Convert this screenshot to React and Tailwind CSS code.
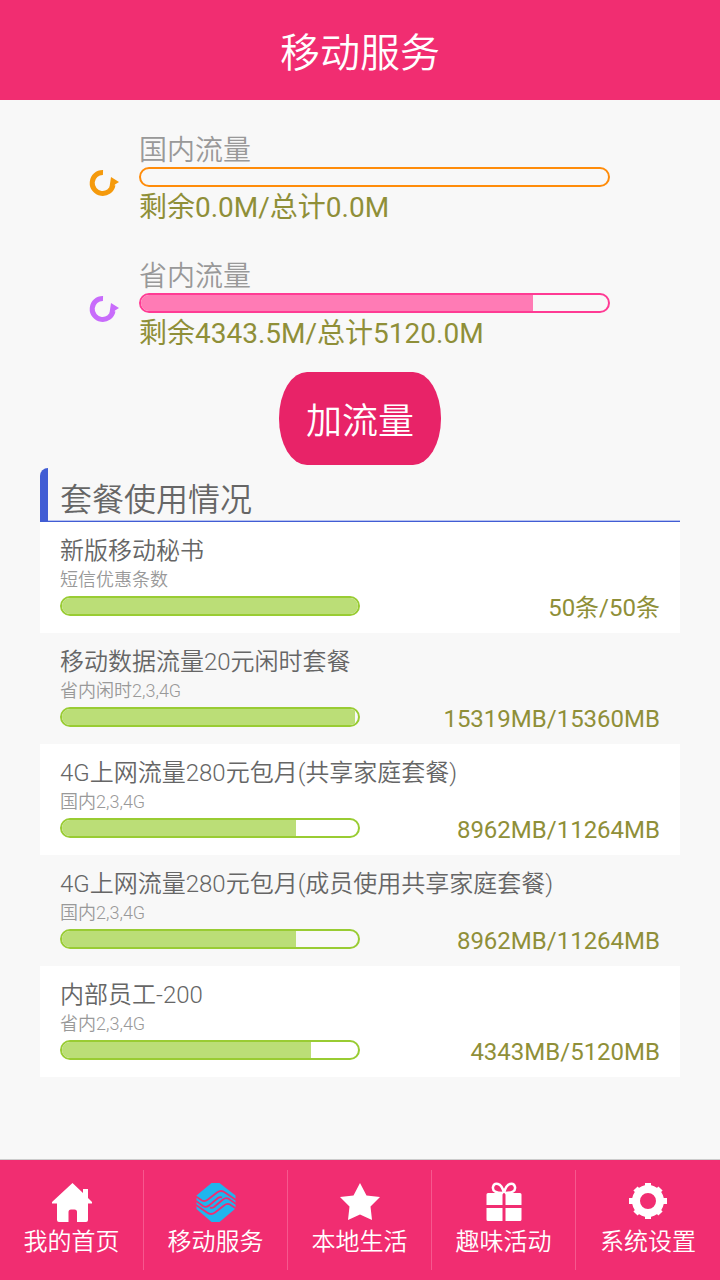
const quotas = [
  {
    name: '国内流量',
    summary: '剩余0.0M/总计0.0M',
    percent: 0,
    icon: 'text-[#f59a0c]',
    border: 'border-[#ff8c0a]',
    fill: 'bg-[#ffbb66]',
  },
  {
    name: '省内流量',
    summary: '剩余4343.5M/总计5120.0M',
    percent: 84,
    icon: 'text-[#c86cfb]',
    border: 'border-[#ff3b94]',
    fill: 'bg-[#ff7bb5]',
  },
];

const packages = [
  { name: '新版移动秘书', detail: '短信优惠条数', usage: '50条/50条', percent: 100 },
  { name: '移动数据流量20元闲时套餐', detail: '省内闲时2,3,4G', usage: '15319MB/15360MB', percent: 99 },
  { name: '4G上网流量280元包月(共享家庭套餐)', detail: '国内2,3,4G', usage: '8962MB/11264MB', percent: 79 },
  { name: '4G上网流量280元包月(成员使用共享家庭套餐)', detail: '国内2,3,4G', usage: '8962MB/11264MB', percent: 79 },
  { name: '内部员工-200', detail: '省内2,3,4G', usage: '4343MB/5120MB', percent: 84 },
];

const tabs = [
  { label: '我的首页', Icon: HomeIcon },
  { label: '移动服务', Icon: MobileIcon },
  { label: '本地生活', Icon: StarIcon },
  { label: '趣味活动', Icon: GiftIcon },
  { label: '系统设置', Icon: GearIcon },
];

export default function App() {
  return (
    <div className="flex min-h-screen flex-col bg-[#f8f8f8] font-['Roboto','Noto_Sans_CJK_SC',sans-serif] font-[350] text-[#666666]">
      <header className="bg-[#f12d71] pt-6 pb-4 text-center text-white">
        <h1 className="text-[40px] leading-[60px]">移动服务</h1>
      </header>
      <main className="flex-1 px-10">
        <section className="flex flex-col gap-[31px] pt-[34px] pr-[70px] pl-[49px]">
          {quotas.map((quota) => (
            <Quota key={quota.name} quota={quota} />
          ))}
        </section>
        <div className="mt-[17px] flex justify-center">
          <button
            type="button"
            className="rounded-[28px/46px] bg-[#e82368] px-[27px] pt-6 pb-4 text-4xl leading-[53px] text-white"
          >
            加流量
          </button>
        </div>
        <section className="mt-[3px]">
          <div className="flex border-b border-[#415dd4] shadow-[inset_0_-1px_#b8c2f0]">
            <span className="w-2 rounded-tl-lg bg-[#415dd4]" />
            <h2 className="pt-3 pl-3 text-[32px] leading-[41px]">套餐使用情况</h2>
          </div>
          <ul>
            {packages.map((item) => (
              <Package key={item.name} item={item} />
            ))}
          </ul>
        </section>
      </main>
      <nav className="grid grid-cols-5 border-t border-[#cccccc] bg-[#f12d71] py-[10px] text-white">
        {tabs.map(({ label, Icon }) => (
          <a
            key={label}
            href="#"
            className="flex h-[100px] flex-col items-center border-r border-[#f6588e] pt-3 text-2xl leading-10 last:border-r-0"
          >
            <Icon />
            {label}
          </a>
        ))}
      </nav>
    </div>
  );
}

const Quota = ({ quota }) => (
  <div className="flex items-center gap-5">
    <button type="button" aria-label="刷新" className={quota.icon}>
      <RefreshIcon />
    </button>
    <div className="flex-1">
      <p className="text-[28px] leading-[33px] text-[#999999]">{quota.name}</p>
      <Progress label={quota.name} percent={quota.percent} border={quota.border} fill={quota.fill} />
      <p className="text-[28px] leading-[42px] font-normal text-[#8f8f38]">{quota.summary}</p>
    </div>
  </div>
);

const Package = ({ item }) => (
  <li className="px-5 pt-3 pb-[9px] odd:bg-white">
    <h3 className="text-2xl leading-[34px]">{item.name}</h3>
    <p className="text-lg leading-6 text-[#999999]">{item.detail}</p>
    <div className="flex items-start justify-between">
      <div className="w-1/2 pt-1">
        <Progress label={item.name} percent={item.percent} border="border-[#99cc33]" fill="bg-[#bbde77]" />
      </div>
      <span className="text-2xl leading-8 font-normal text-[#8f8f38]">{item.usage}</span>
    </div>
  </li>
);

const Progress = ({ label, percent, border, fill }) => (
  <div
    role="progressbar"
    aria-label={label}
    aria-valuenow={percent}
    className={`h-5 overflow-hidden rounded-full border-2 ${border}`}
  >
    <div className={`h-full ${fill}`} style={{ width: `${percent}%` }} />
  </div>
);

const RefreshIcon = () => (
  <svg width="30" height="30" viewBox="0 0 30 30" fill="none">
    <path d="M14 5.500A10.500 10.500 0 1 0 24 18" stroke="currentColor" strokeWidth="5" />
    <path d="M22 10l8 5-4 2.500-2.500 4.500-3-2z" fill="currentColor" />
  </svg>
);

function HomeIcon() {
  return (
    <svg width="40" height="40" viewBox="0 0 40 40" fill="currentColor">
      <path d="M20.500 1 0 20v1.500h5V38a2 2 0 0 0 2 2h9.500V30q0-2.500 2.500-2.500h3.500q2.500 0 2.500 2.500v10h9a2 2 0 0 0 2-2V21.500h4V20l-4-4V7h-5v4z" />
    </svg>
  );
}

function MobileIcon() {
  return (
    <svg width="40" height="40" viewBox="0 0 40 40" fill="none">
      <path d="M15.500 1h8L39.500 13.500v13L23.500 40h-8L.5 27V13.500z" fill="#1fb5ee" />
      <g stroke="#f12d71" strokeWidth="1.800">
        <path d="M0 14.500L6 18.500Q9 20 12 17.500L21 10.500Q25 7.500 29 10.500L40 18" />
        <path d="M0 19L7 24Q10 26 13 23.500L22 16Q24 14.500 26 15.500" />
        <path d="M40 26.500L34 22.500Q31 21 28 23.500L19 30.500Q15 33.500 11 30.500L0 23" />
        <path d="M40 22L33 17Q30 15 27 17.500L18 25Q16 26.500 14 25.500" />
      </g>
    </svg>
  );
}

function StarIcon() {
  return (
    <svg width="40" height="40" viewBox="0 0 40 40" fill="currentColor">
      <path d="M20 1l6.500 12.500L40 15l-9.500 9.500L32 38 20 32.500 8 38l1.500-13.500L0 15l13.500-1.500z" />
    </svg>
  );
}

function GiftIcon() {
  return (
    <svg width="40" height="40" viewBox="0 0 40 40" fill="currentColor">
      <path d="M4 11h14.500v12H2.500V12.500q0-1.500 1.500-1.500zM21.500 11H36q1.500 0 1.500 1.500V23h-16zM2.500 26h16v13H4q-1.500 0-1.500-1.500zM21.500 26h16v11.500q0 1.500-1.500 1.500H21.500z" />
      <path
        d="M19 11Q8 11 9 5q1-4 5-3 4 1 6 9 2-8 6-9 4-1 5 3 1 6-10 6"
        fill="none"
        stroke="currentColor"
        strokeWidth="2.500"
      />
    </svg>
  );
}

function GearIcon() {
  return (
    <svg width="40" height="40" viewBox="0 0 40 40" fill="none" stroke="currentColor">
      <circle cx="20" cy="19" r="12" strokeWidth="8" />
      <path
        d="M20 1v5M20 32v5M1 19h6M33 19h6M7.500 6.500l4 4M28.500 27.500l4 4M32.500 6.500l-4 4M11.500 27.500l-4 4"
        strokeWidth="6"
      />
    </svg>
  );
}
